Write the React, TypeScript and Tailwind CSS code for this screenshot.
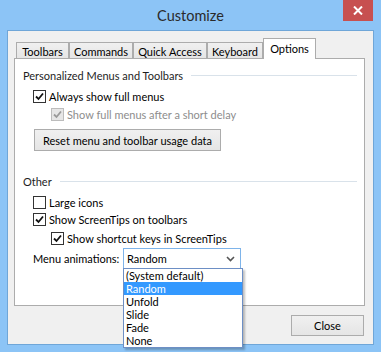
import { useState } from "react";

type Tab = { id: string; label: string; w: string };

const tabs: Tab[] = [
  { id: "toolbars", label: "Toolbars", w: "w-[53px]" },
  { id: "commands", label: "Commands", w: "w-[64px]" },
  { id: "quick", label: "Quick Access", w: "w-[74px]" },
  { id: "keyboard", label: "Keyboard", w: "w-[56px]" },
  { id: "options", label: "Options", w: "w-[53px]" },
];

const animations = ["(System default)", "Random", "Unfold", "Slide", "Fade", "None"];

function CheckMark({ color }: { color: string }) {
  return (
    <svg width="9" height="9" viewBox="0 0 9 9">
      <path d="M1 4.5 L3.5 7 L8 1.5" fill="none" stroke={color} strokeWidth="1.8" />
    </svg>
  );
}

function CheckRow({ label, checked, disabled, indent }: { label: string; checked: boolean; disabled?: boolean; indent?: boolean }) {
  return (
    <div className={`flex h-4 items-center ${indent ? "pl-[36px]" : "pl-[18px]"}`}>
      <span
        className={`grid h-[13px] w-[13px] place-items-center border ${
          disabled ? "border-[#bcbcbc] bg-[#e6e6e6]" : "border-[#333] bg-white"
        }`}
      >
        {checked && <CheckMark color={disabled ? "#9a9a9a" : "#111"} />}
      </span>
      <span className={`ml-[3px] ${disabled ? "text-[#8d8d8d]" : "text-black"}`}>{label}</span>
    </div>
  );
}

function Heading({ label }: { label: string }) {
  return (
    <div className="flex h-4 items-center pl-2 pr-[7px]">
      <span className="text-[#1e1e1e]">{label}</span>
      <span className="ml-2 h-px flex-1 bg-[#d9e2ea]" />
    </div>
  );
}

export default function App() {
  const [active, setActive] = useState("options");

  return (
    <div className="flex h-[352px] w-[381px] flex-col overflow-hidden whitespace-nowrap bg-[#8cc4f6] text-[11px] leading-[13px] text-black [font-family:Lato,'Noto_Sans',sans-serif]">
      <div className="relative flex h-[30px] shrink-0 items-center justify-center">
        <span className="text-[14.5px] text-[#2a2a2a]">Customize</span>
        <button type="button" className="absolute right-[8px] top-0 grid h-[21px] w-[30px] place-items-center bg-[#c75050]">
          <svg width="10" height="9" viewBox="0 0 10 9">
            <path d="M1 0.5 L9 8.5 M9 0.5 L1 8.5" stroke="#fff" strokeWidth="2" />
          </svg>
        </button>
      </div>

      <div className="mx-[7px] mb-[7px] flex flex-1 flex-col border border-[#6fa6d8] bg-[#f0f0f0] pl-[6px] pr-[8px] pt-[7px]">
        <div className="relative z-10 -mb-px ml-[2px] flex h-[21px] items-end">
          {tabs.map((t) => {
            const sel = t.id === active;
            return (
              <button
                key={t.id}
                type="button"
                onClick={() => setActive(t.id)}
                className={`${t.w} flex shrink-0 justify-center border border-b-0 border-[#acacac] ${
                  sel ? "h-[21px] bg-white pt-[3px]" : "mb-px h-4 bg-gradient-to-b from-[#f0f0f0] to-[#e5e5e5] pt-[2px]"
                }`}
              >
                {t.label}
              </button>
            );
          })}
        </div>

        <div className="h-[248px] border border-[#acacac] bg-white">
          <div className="mt-2">
            <Heading label="Personalized Menus and Toolbars" />
          </div>
          <div className="mt-[5px]">
            <CheckRow label="Always show full menus" checked />
          </div>
          <div className="mt-[2px]">
            <CheckRow label="Show full menus after a short delay" checked disabled indent />
          </div>
          <div className="mt-[7px] pl-[19px]">
            <button
              type="button"
              className="h-[22px] w-[187px] border border-[#acacac] bg-gradient-to-b from-[#f0f0f0] to-[#e5e5e5]"
            >
              Reset menu and toolbar usage data
            </button>
          </div>

          <div className="mt-[22px]">
            <Heading label="Other" />
          </div>
          <div className="mt-[5px]">
            <CheckRow label="Large icons" checked={false} />
          </div>
          <div className="mt-px">
            <CheckRow label="Show ScreenTips on toolbars" checked />
          </div>
          <div className="mt-[3px]">
            <CheckRow label="Show shortcut keys in ScreenTips" checked indent />
          </div>
          <div className="mt-[2px] flex h-[21px] items-center pl-[18px]">
            <span className="w-[90px]">Menu animations:</span>
            <div className="relative">
              <div className="flex h-[21px] w-[118px] items-center justify-between border border-[#7eb4ea] bg-white pl-[3px] pr-[5px]">
                <span>Random</span>
                <svg width="9" height="6" viewBox="0 0 9 6">
                  <path d="M1 1 L4.5 4.5 L8 1" fill="none" stroke="#555" strokeWidth="1.6" />
                </svg>
              </div>
              <ul className="absolute left-0 top-[20px] z-20 w-[120px] border border-[#6d8fc5] bg-white shadow-[2px_2px_2px_rgba(0,0,0,0.25)]">
                {animations.map((a) => (
                  <li
                    key={a}
                    className={`h-[13px] pl-[2px] ${a === "Random" ? "bg-[#3399ff] text-white" : ""}`}
                  >
                    {a}
                  </li>
                ))}
              </ul>
            </div>
          </div>
        </div>

        <div className="mt-[9px] flex justify-end pr-px">
          <button
            type="button"
            className="h-[21px] w-[73px] border border-[#acacac] bg-gradient-to-b from-[#f0f0f0] to-[#e5e5e5]"
          >
            Close
          </button>
        </div>
      </div>
    </div>
  );
}
